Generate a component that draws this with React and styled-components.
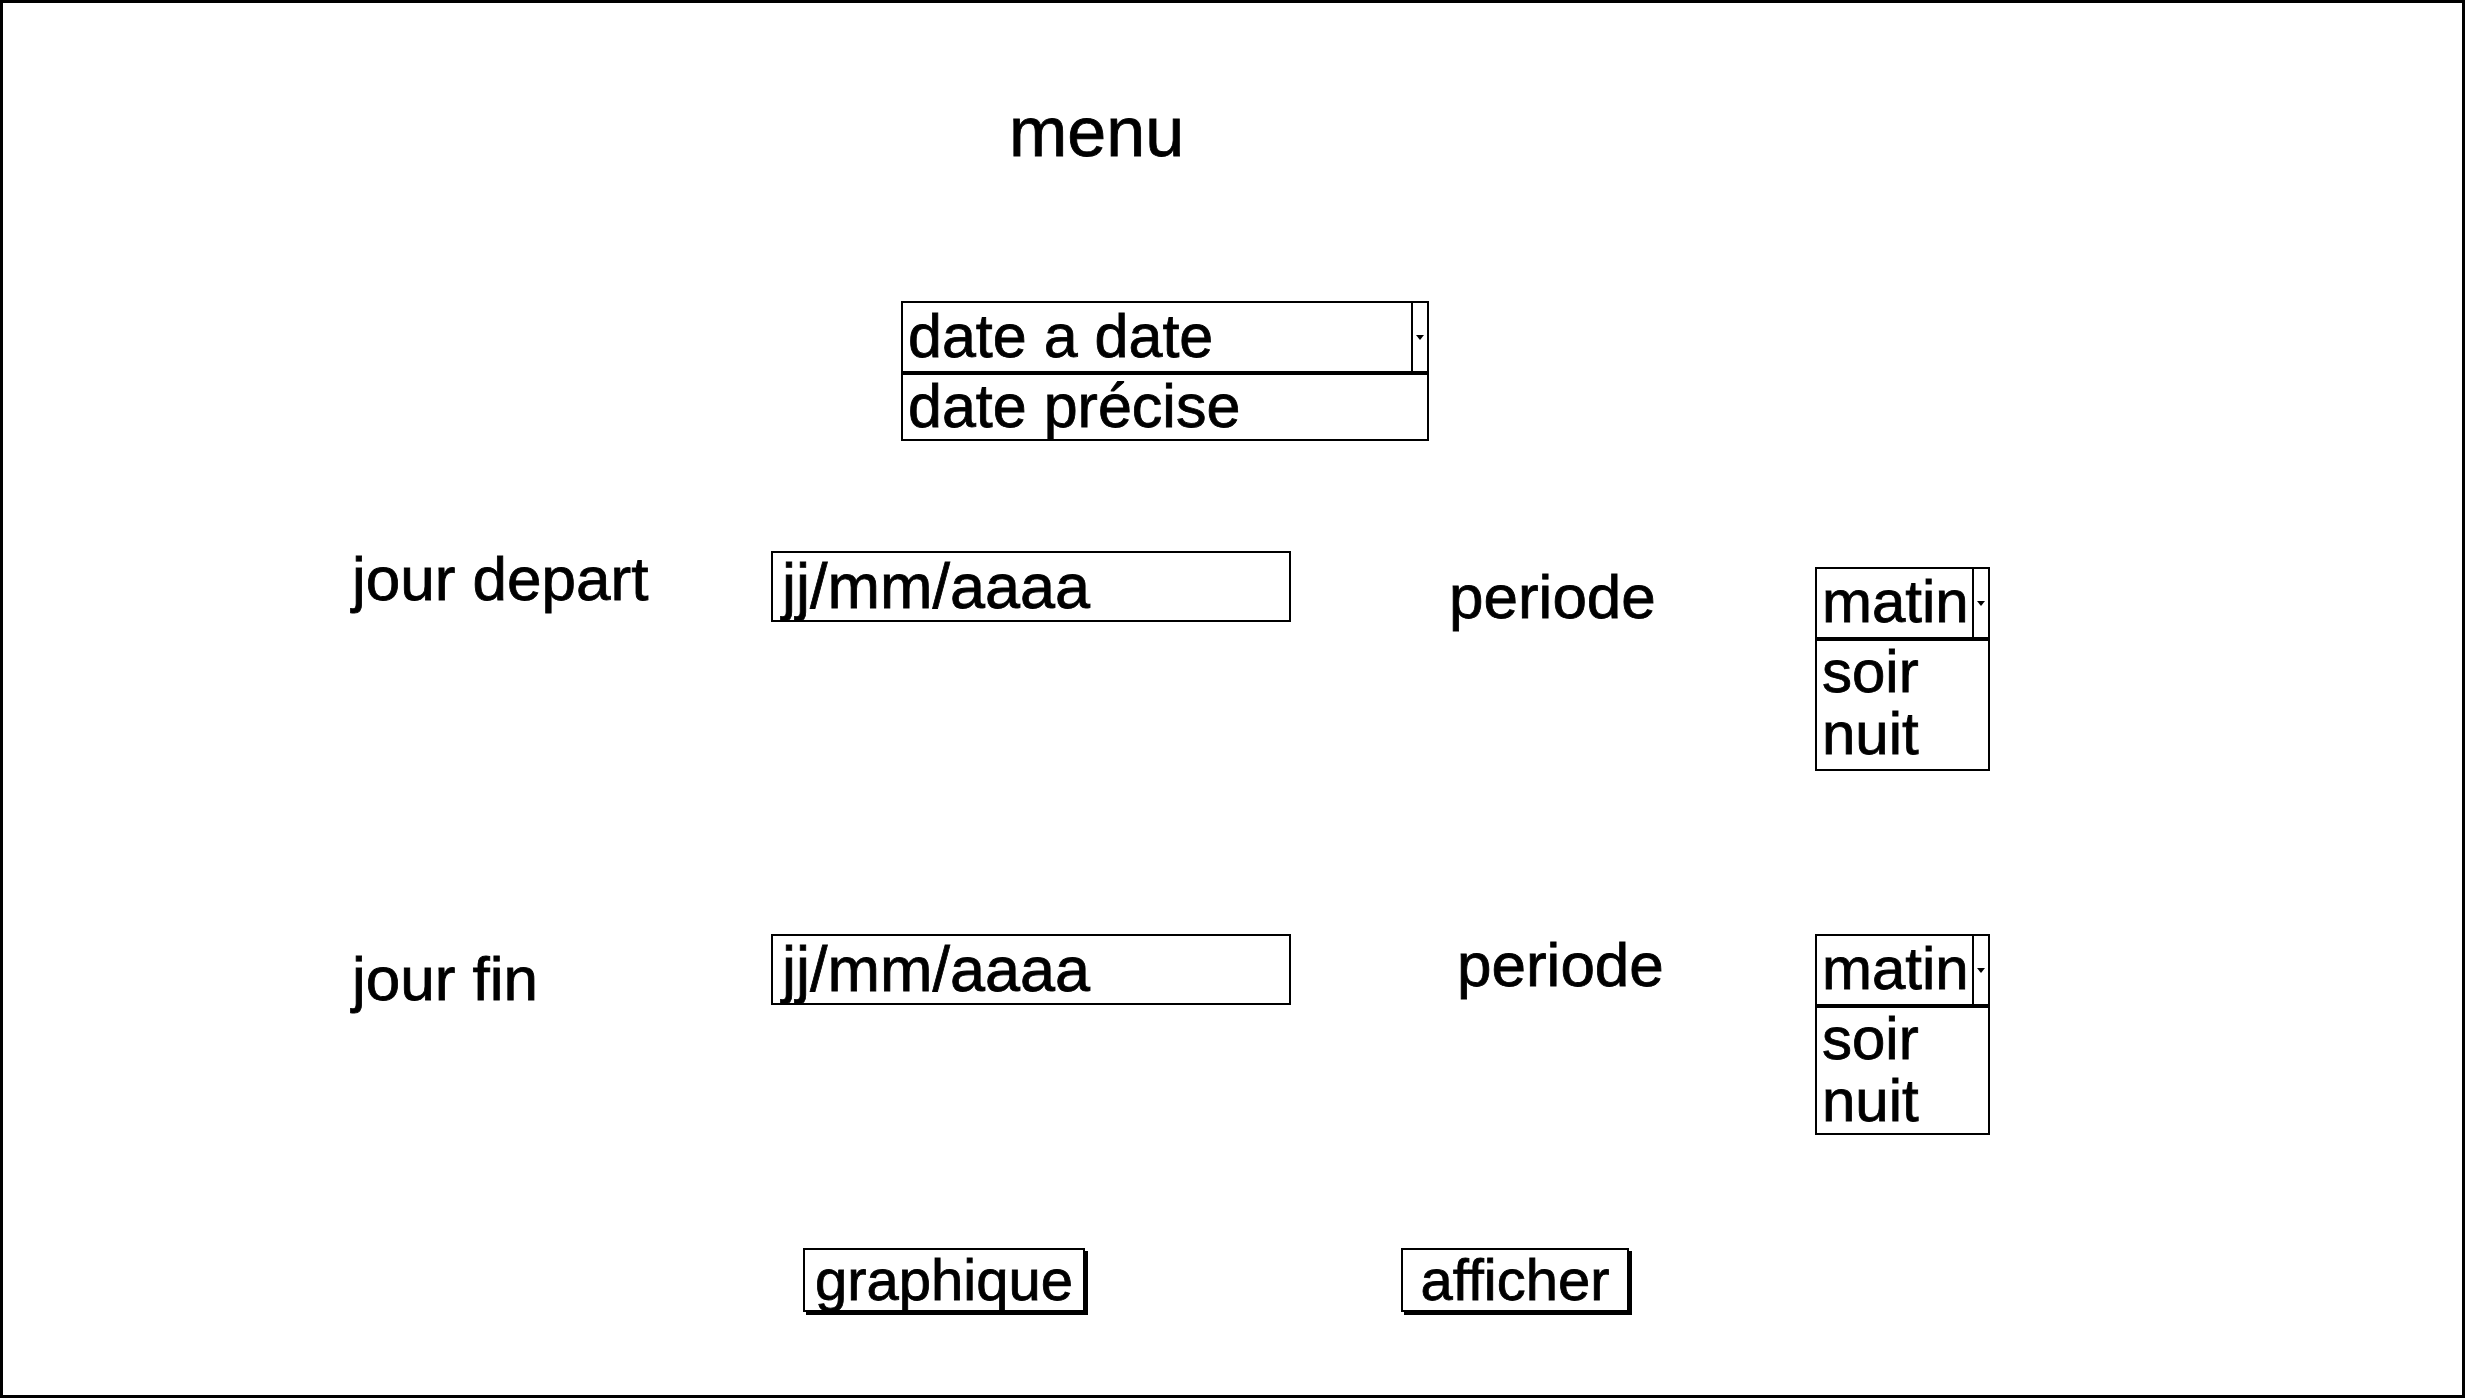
import React from 'react';
import styled, { createGlobalStyle } from 'styled-components';

const GlobalStyle = createGlobalStyle`
  * {
    box-sizing: border-box;
  }
  body {
    margin: 0;
    background: #fff;
    color: #000;
    font-family: "Liberation Sans", Arial, sans-serif;
    -webkit-text-stroke: 0.8px #000;
  }
`;

const Frame = styled.div`
  width: 2465px;
  height: 1398px;
  border: 3px solid #000;
  background: #fff;
  display: flex;
  flex-direction: column;
`;

const Title = styled.h1`
  margin: 95px 0 0;
  padding-left: 1006px;
  font-size: 70px;
  line-height: 68px;
  font-weight: normal;
`;

const DateSelect = styled.div`
  margin-top: 135px;
  padding-left: 898px;
`;

const Combo = styled.div`
  display: flex;
  width: ${(p) => p.$w}px;
  height: 72px;
  border: 2px solid #000;
  background: #fff;
`;

const ComboValue = styled.div`
  flex: 1;
  padding-left: 5px;
  font-size: ${(p) => p.$size || 60}px;
  line-height: 66px;
  white-space: nowrap;
  overflow: hidden;
`;

const ComboButton = styled.div`
  width: 16px;
  border-left: 2px solid #000;
  display: flex;
  align-items: center;
  justify-content: center;

  &::after {
    content: '';
    border-left: 4px solid transparent;
    border-right: 4px solid transparent;
    border-top: 5px solid #000;
  }
`;

const OptionList = styled.div`
  width: ${(p) => p.$w}px;
  height: ${(p) => p.$h}px;
  border: 2px solid #000;
  background: #fff;
`;

const Option = styled.div`
  padding-left: 5px;
  font-size: ${(p) => p.$size || 60}px;
  line-height: 62px;
  white-space: nowrap;
`;

const FieldRow = styled.div`
  margin-top: ${(p) => p.$gap}px;
  padding-left: 349px;
  display: grid;
  grid-template-columns: 419px 678px 366px 175px;
  align-items: start;
`;

const Label = styled.div`
  margin-top: ${(p) => p.$top || 0}px;
  margin-left: ${(p) => p.$shift || 0}px;
  font-size: 62px;
  line-height: 72px;
  white-space: nowrap;
`;

const TextBox = styled.div`
  margin-top: ${(p) => p.$top || 0}px;
  width: 520px;
  height: 71px;
  border: 2px solid #000;
  padding-left: 9px;
  font-size: 63px;
  line-height: 66px;
  white-space: nowrap;
`;

const Stack = styled.div`
  margin-top: ${(p) => p.$top || 0}px;
  display: flex;
  flex-direction: column;
`;

const ButtonRow = styled.div`
  margin-top: 113px;
  padding-left: 800px;
  display: flex;
  gap: 316px;
`;

const Button = styled.button`
  width: ${(p) => p.$w}px;
  height: 64px;
  padding: 0;
  border: 2px solid #000;
  box-shadow: 3px 3px 0 #000;
  background: #fff;
  color: #000;
  font-family: "Liberation Sans", Arial, sans-serif;
  font-size: 58px;
  line-height: 58px;
  text-align: center;
  white-space: nowrap;
`;

const Select = ({ value, options, width, listHeight, top, size }) => (
  <Stack $top={top}>
    <Combo $w={width}>
      <ComboValue $size={size}>{value}</ComboValue>
      <ComboButton />
    </Combo>
    <OptionList $w={width} $h={listHeight}>
      {options.map((o) => (
        <Option key={o} $size={size}>
          {o}
        </Option>
      ))}
    </OptionList>
  </Stack>
);

const App = () => {
  return (
    <Frame>
      <GlobalStyle />
      <Title>menu</Title>

      <DateSelect>
        <Select value="date a date" options={['date précise']} width={528} listHeight={68} size={61} />
      </DateSelect>

      <FieldRow $gap={99}>
        <Label $top={3}>jour depart</Label>
        <TextBox $top={11}>jj/mm/aaaa</TextBox>
        <Label $top={21}>periode</Label>
        <Select value="matin" options={['soir', 'nuit']} width={175} listHeight={132} top={27} />
      </FieldRow>

      <FieldRow $gap={154}>
        <Label $top={18}>jour fin</Label>
        <TextBox $top={9}>jj/mm/aaaa</TextBox>
        <Label $top={4} $shift={8}>periode</Label>
        <Select value="matin" options={['soir', 'nuit']} width={175} listHeight={129} top={9} />
      </FieldRow>

      <ButtonRow>
        <Button $w={282}>graphique</Button>
        <Button $w={228}>afficher</Button>
      </ButtonRow>
    </Frame>
  );
};

export default App;
